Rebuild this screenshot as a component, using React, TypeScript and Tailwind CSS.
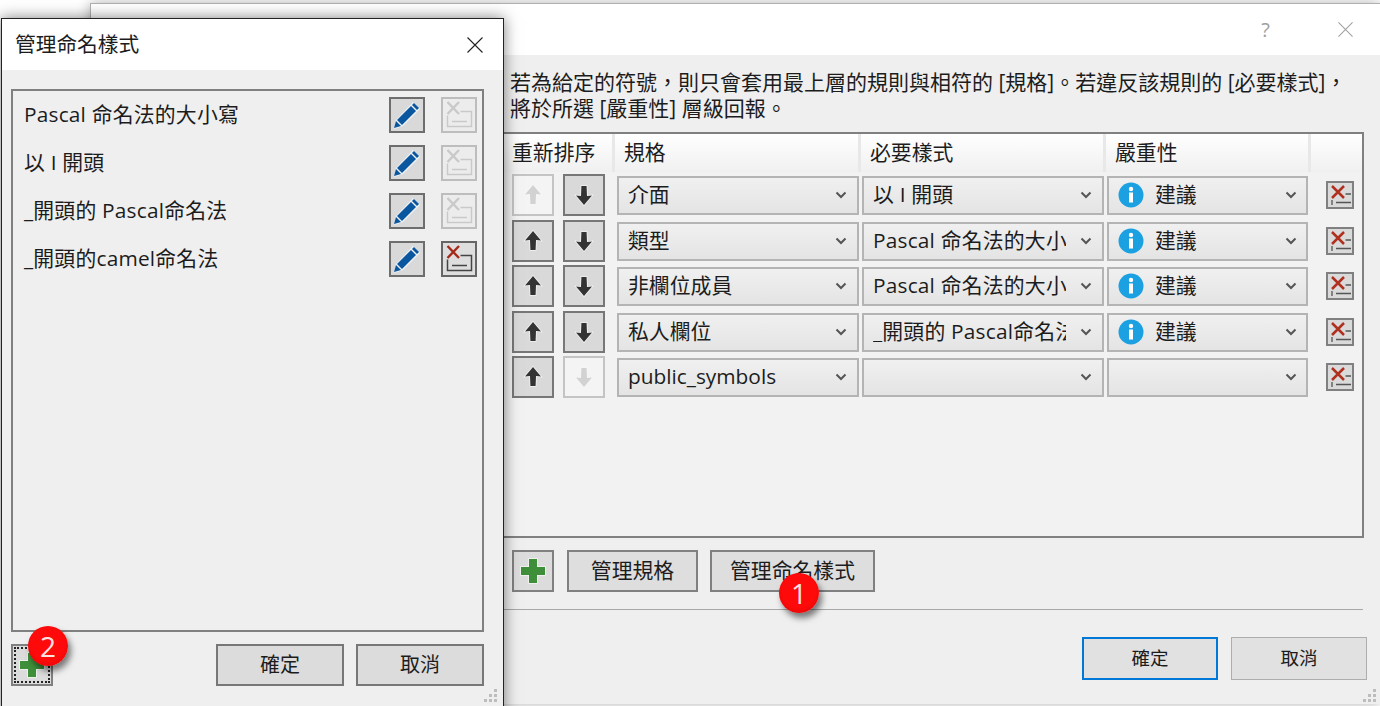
const ink = "#1c1c1c";

const rows = [
  { up: false, down: true, scope: "介面", style: "以 I 開頭", info: true, h: "h-[46px]" },
  { up: true, down: true, scope: "類型", style: "Pascal 命名法的大小寫", info: true, h: "h-[45px]" },
  { up: true, down: true, scope: "非欄位成員", style: "Pascal 命名法的大小寫", info: true, h: "h-[46px]" },
  { up: true, down: true, scope: "私人欄位", style: "_開頭的 Pascal命名法", info: true, h: "h-[45px]" },
  { up: true, down: false, scope: "public_symbols", style: "", info: false, h: "h-[46px]" },
];

const namingStyles = [
  { name: "Pascal 命名法的大小寫", canDelete: false },
  { name: "以 I 開頭", canDelete: false },
  { name: "_開頭的 Pascal命名法", canDelete: false },
  { name: "_開頭的camel命名法", canDelete: true },
];

function CloseIcon({ color, size }: { color: string; size: number }) {
  return (
    <svg width={size} height={size} viewBox="0 0 16 16" fill="none" stroke={color} strokeWidth="1.1">
      <path d="M0.5 0.5L15.5 15.5M15.5 0.5L0.5 15.5" />
    </svg>
  );
}

function Arrow({ dir, on }: { dir: "up" | "down"; on: boolean }) {
  return (
    <svg width="24" height="26" viewBox="0 0 24 26" className={dir === "down" ? "rotate-180" : ""}>
      <path
        d="M12 3L20 12.5L15 12L14.6 22H9.4L9 12L4 12.5Z"
        fill={on ? "#333333" : "#d2d2d2"}
        stroke={on ? "#f4f4f4" : "#f6f6f6"}
        strokeWidth="1.5"
        paintOrder="stroke"
      />
    </svg>
  );
}

function ArrowButton({ dir, on }: { dir: "up" | "down"; on: boolean }) {
  return (
    <div
      className={`flex h-[42px] w-[42px] flex-none items-center justify-center border-2 ${
        on ? "border-[#777777] bg-[#d9d9d9]" : "border-[#c4c4c4] bg-[#f4f4f4]"
      }`}
    >
      <Arrow dir={dir} on={on} />
    </div>
  );
}

function Chevron() {
  return (
    <svg width="12" height="8" viewBox="0 0 12 8" fill="none" stroke="#555555" strokeWidth="2" className="ml-auto flex-none">
      <path d="M1.5 1.5L6 6L10.5 1.5" />
    </svg>
  );
}

function Select({ width, pr, children }: { width: string; pr: string; children?: React.ReactNode }) {
  return (
    <div
      className={`mt-[2px] flex h-[39px] flex-none items-center border-2 border-[#b4b4b4] bg-gradient-to-b from-[#f0f0f0] to-[#e4e4e4] pb-[2px] pl-[9px] ${width} ${pr}`}
    >
      {children}
      <Chevron />
    </div>
  );
}

function InfoIcon() {
  return (
    <svg width="26" height="26" viewBox="0 0 26 26" className="flex-none">
      <circle cx="13" cy="13" r="12.5" fill="#1ba1e2" />
      <circle cx="13" cy="7" r="2.2" fill="#ffffff" />
      <rect x="11" y="10.5" width="4" height="10" fill="#ffffff" />
    </svg>
  );
}

function SmallDelete() {
  return (
    <div className="mt-[7px] ml-[18px] flex h-[28px] w-[28px] flex-none items-center justify-center border-2 border-[#808080] bg-[#dadada]">
      <svg width="24" height="24" viewBox="0 0 24 24" fill="none">
        <path d="M4 3L16 15M16 3L4 15" stroke="#b03020" strokeWidth="2.5" />
        <path d="M17.5 11H23M4 17V22M8 19.5H23" stroke="#555555" strokeWidth="1.3" />
      </svg>
    </div>
  );
}

function Pencil() {
  return (
    <svg width="30" height="30" viewBox="0 0 30 30">
      <path d="M2 29L4 20L21 2L28 9L11 26Z" fill="#eef2f6" />
      <path d="M22 3L27 8L25 10L20 5Z" fill="#0a569f" />
      <path d="M19 6L24 11L10 25L5 20Z" fill="#0a569f" />
      <path d="M4 21L9 26L2 28Z" fill="#0a569f" />
    </svg>
  );
}

function ListDelete({ on }: { on: boolean }) {
  return (
    <div
      className={`flex h-[36px] w-[36px] flex-none items-center justify-center border-2 ${
        on ? "border-[#666666] bg-[#dedede]" : "border-[#bdbdbd] bg-[#ececec]"
      }`}
    >
      <svg width="32" height="32" viewBox="0 0 32 32" fill="none">
        <path d="M4.5 3L16 15M16 3L4.5 15" stroke={on ? "#a52a1a" : "#c9c9c9"} strokeWidth="2.4" />
        <path d="M4.5 16.5V27.5H28.5V12.5H17.5M9 22.5H24" stroke={on ? "#444444" : "#c9c9c9"} strokeWidth="1.5" />
      </svg>
    </div>
  );
}

function Plus() {
  return (
    <svg width="28" height="28" viewBox="0 0 28 28">
      <path
        d="M10 2H18V10H26V18H18V26H10V18H2V10H10Z"
        fill="#3f8f3a"
        stroke="#f2f6f0"
        strokeWidth="1.5"
        paintOrder="stroke"
      />
    </svg>
  );
}

function Grip() {
  const dots = [
    [10, 0],
    [10, 5],
    [5, 5],
    [10, 10],
    [5, 10],
    [0, 10],
  ];
  return (
    <svg width="14" height="14" viewBox="0 0 14 14" className="absolute right-[3px] bottom-[1px]" fill="#bdbdbd">
      {dots.map(([x, y]) => (
        <rect key={`${x}-${y}`} x={x} y={y} width="3" height="3" />
      ))}
    </svg>
  );
}

function Badge({ n, pos }: { n: number; pos: string }) {
  return (
    <div
      className={`absolute flex h-[40px] w-[40px] items-center justify-center rounded-full bg-[radial-gradient(circle_at_50%_45%,#ff0a0a_55%,#cf0606_100%)] text-[28px] leading-none text-[#fbe3e3] shadow-[3px_5px_6px_rgba(0,0,0,0.5)] font-['Open_Sans',sans-serif] ${pos}`}
    >
      {n}
    </div>
  );
}

function HeaderCell({ label, width }: { label: string; width: string }) {
  return (
    <div
      className={`flex h-[38px] flex-none items-center border-r-[3px] border-[#e8e8e8] bg-gradient-to-b from-[#ffffff] to-[#f0f0f0] pb-[2px] pl-[9px] ${width}`}
    >
      {label}
    </div>
  );
}

export default function App() {
  return (
    <div
      className="relative h-[706px] w-[1380px] overflow-hidden bg-white text-[20.85px] leading-none font-['Open_Sans','Noto_Sans_CJK_TC',sans-serif]"
      style={{ color: ink }}
    >
      {/* rear dialog */}
      <div className="absolute top-[3px] right-0 left-[90px] flex h-[701px] flex-col border-t border-l border-[#b0b0b0] bg-[#efefef] shadow-[0_0_12px_rgba(0,0,0,0.3)]">
        <div className="flex h-[51px] flex-none items-center justify-end bg-white pr-[27px]">
          <span className="mr-[68px] text-[20px] text-[#a0a0a0]">?</span>
          <CloseIcon color="#a0a0a0" size={15} />
        </div>
        <div className="flex min-h-0 flex-1 flex-col pr-[16px] pl-[412px]">
          <p className="mt-[14px] pl-[7px] text-[21px] leading-[26px] whitespace-nowrap">
            若為給定的符號，則只會套用最上層的規則與相符的 [規格]。若違反該規則的 [必要樣式]，
            <br />
            將於所選 [嚴重性] 層級回報。
          </p>

          <div className="mt-[11px] flex h-[406px] flex-none flex-col border-2 border-l-0 border-[#808080] bg-[#f2f2f2]">
            <div className="flex flex-none">
              <HeaderCell label="重新排序" width="w-[112px]" />
              <HeaderCell label="規格" width="w-[246px]" />
              <HeaderCell label="必要樣式" width="w-[245px]" />
              <HeaderCell label="嚴重性" width="w-[205px]" />
              <div className="h-[38px] flex-1 bg-gradient-to-b from-[#ffffff] to-[#f0f0f0]" />
            </div>
            <div className="mt-[2px] flex flex-col">
              {rows.map((r) => (
                <div key={r.scope} className={`flex items-start pl-[9px] ${r.h}`}>
                  <ArrowButton dir="up" on={r.up} />
                  <div className="ml-[9px]">
                    <ArrowButton dir="down" on={r.down} />
                  </div>
                  <div className="ml-[12px]">
                    <Select width="w-[242px]" pr="pr-[10px]">
                      <span>{r.scope}</span>
                    </Select>
                  </div>
                  <div className="ml-[3px]">
                    <Select width="w-[242px]" pr="pr-[10px]">
                      <span className="w-[193px] flex-none overflow-hidden tracking-[0.2px] whitespace-nowrap">{r.style}</span>
                    </Select>
                  </div>
                  <div className="ml-[3px]">
                    <Select width="w-[201px]" pr="pr-[9px]">
                      {r.info && (
                        <>
                          <InfoIcon />
                          <span className="ml-[11px]">建議</span>
                        </>
                      )}
                    </Select>
                  </div>
                  <SmallDelete />
                </div>
              ))}
            </div>
          </div>

          <div className="mt-[12px] flex flex-none items-center pl-[9px]">
            <div className="flex h-[42px] w-[42px] items-center justify-center border-2 border-[#808080] bg-[#dcdcdc]">
              <Plus />
            </div>
            <div className="ml-[13px] flex h-[42px] w-[131px] items-center justify-center border-2 border-[#808080] bg-[#dedede] pb-[2px]">
              管理規格
            </div>
            <div className="ml-[12px] flex h-[42px] w-[165px] items-center justify-center border-2 border-[#808080] bg-[#dedede] pb-[2px]">
              管理命名樣式
            </div>
          </div>

          <div className="mt-[17px] mr-[1px] h-px flex-none bg-[#a8a8a8]" />

          <div className="mt-[27px] -mr-[3px] flex flex-none justify-end text-[18.5px]">
            <div className="flex h-[43px] w-[136px] items-center justify-center border-2 border-[#0078d7] bg-[#e1e1e1]">
              確定
            </div>
            <div className="ml-[13px] flex h-[43px] w-[136px] items-center justify-center border border-[#adadad] bg-[#e1e1e1]">
              取消
            </div>
          </div>
        </div>
        <Grip />
      </div>

      {/* front dialog */}
      <div className="absolute top-[18px] left-[1px] flex h-[700px] w-[503px] flex-col border border-[#222222] bg-[#efefef] shadow-[0_0_14px_rgba(0,0,0,0.5)]">
        <div className="flex h-[51px] flex-none items-center justify-between bg-white pr-[20px] pl-[13px]">
          <span className="text-[20.7px]">管理命名樣式</span>
          <CloseIcon color="#222222" size={16} />
        </div>
        <div className="mx-[9px] mt-[19px] flex h-[543px] w-[473px] flex-none flex-col gap-[12px] border-2 border-[#808080] pt-[6px] pr-[5px] pl-[11px]">
          {namingStyles.map((s) => (
            <div key={s.name} className="flex h-[36px] flex-none items-center">
              <span className="pb-[2px] tracking-[0.2px]">{s.name}</span>
              <div className="ml-auto flex h-[36px] w-[36px] items-center justify-center border-2 border-[#6e6e6e] bg-[#d9d9d9]">
                <Pencil />
              </div>
              <div className="ml-[16px]">
                <ListDelete on={s.canDelete} />
              </div>
            </div>
          ))}
        </div>
        <div className="mx-[9px] mt-[12px] flex w-[473px] flex-none text-[20px]">
          <div className="flex h-[42px] w-[42px] flex-none border-2 border-[#808080] bg-[#dcdcdc] p-[1px]">
            <div className="flex flex-1 items-center justify-center border-2 border-dotted border-[#222222]">
              <Plus />
            </div>
          </div>
          <div className="ml-auto flex h-[42px] w-[128px] items-center justify-center border-2 border-[#777777] bg-[#dcdcdc]">
            確定
          </div>
          <div className="ml-[12px] flex h-[42px] w-[128px] items-center justify-center border-2 border-[#777777] bg-[#dcdcdc]">
            取消
          </div>
        </div>
        <div className="absolute top-[665px] right-[2px] h-[20px] w-[20px]">
          <Grip />
        </div>
      </div>

      <Badge n={1} pos="top-[573px] left-[779px]" />
      <Badge n={2} pos="top-[626px] left-[28px]" />
    </div>
  );
}
